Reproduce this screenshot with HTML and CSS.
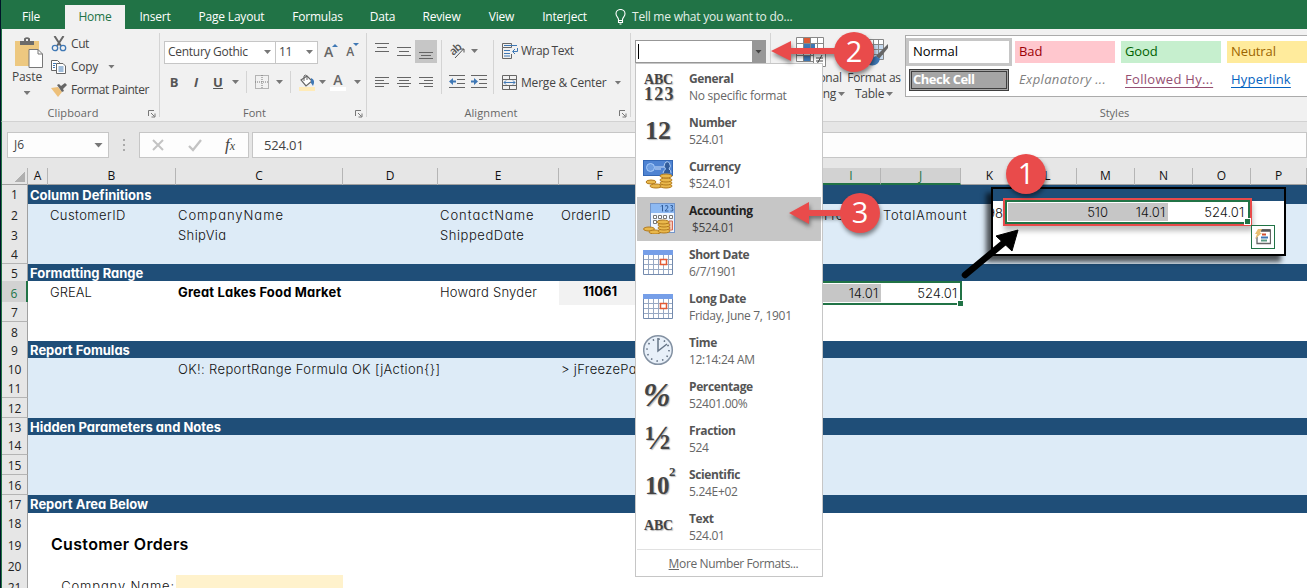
FILE: index.html
```
<!DOCTYPE html>
<html lang="en">
<head>
<meta charset="utf-8">
<title>Customer Orders</title>
<link rel="stylesheet" href="styles.css">
</head>
<body>
<div class="app">
  <nav class="tabs">
    <span class="tab file">File</span><span class="tab home">Home</span><span class="tab t-insert">Insert</span><span class="tab t-page">Page Layout</span><span class="tab t-form">Formulas</span><span class="tab t-data">Data</span><span class="tab t-rev">Review</span><span class="tab t-view">View</span><span class="tab t-int">Interject</span>
    <span class="tell"><svg width="11" height="16" viewBox="0 0 11 16" fill="none" stroke="#fff" stroke-width="1.1"><path d="M3.500 10.500C3.500 8.500 1 7.500 1 4.800A4.500 4.300 0 0 1 10 4.800C10 7.500 7.500 8.500 7.500 10.500V13.500H3.500ZM3.500 11.500H7.500M4.500 15H6.500"/></svg><span>Tell me what you want to do...</span></span>
  </nav>

  <section class="ribbon">
    <div class="group clip">
      <div class="tools">
        <div class="paste">
          <svg width="30" height="32" viewBox="0 0 30 32"><path d="M1 4H25V29H1Z" fill="#edc880"/><path d="M6 8V4H10V1.500Q13 -1 16 1.500V4H20V8Z" fill="#6b6b6b"/><rect x="12" y="2" width="2" height="2" fill="#eee"/><path d="M15 12.500H24L28.500 17V30.500H15Z" fill="#fff" stroke="#777"/><path d="M24 12.500V17H28.500" fill="none" stroke="#777"/></svg>
          <span>Paste</span><i class="car"></i>
        </div>
        <div class="cliplist">
          <div><svg width="16" height="16" viewBox="0 0 16 16" fill="none"><path d="M3.500 0L10 10M12.500 0L6 10" stroke="#666" stroke-width="2"/><circle cx="4" cy="12" r="2.700" stroke="#3f78b5" stroke-width="1.300"/><circle cx="12" cy="12" r="2.700" stroke="#3f78b5" stroke-width="1.300"/></svg><span>Cut</span></div>
          <div><svg width="16" height="16" viewBox="0 0 16 16" fill="#fff" stroke="#666"><path d="M.5 1.500H6.500L8.500 3.500V11.500H.5Z"/><path d="M5.500 4.500H12L14.500 7V14.500H5.500Z"/><path d="M2 4.500H5M2 6.500H4M2 8.500H4M7.500 8H12.500M7.500 10H12.500M7.500 12H12.500" stroke="#3f78b5"/></svg><span class="copy">Copy</span><i class="car"></i></div>
          <div><svg width="16" height="16" viewBox="0 0 16 16"><path d="M0 6L7 5L11 10L7 15Z" fill="#edc07a"/><path d="M6 3L8 2L10 4L14 1L16 3L12 7L13 9L11 10Z" fill="#666"/></svg><span class="painter">Format Painter</span></div>
        </div>
      </div>
      <footer>Clipboard</footer><svg class="launch" viewBox="0 0 8 8"><path d="M.5 6V.5H6M3 3L6.500 6.500M7 3.500V7H3.500" fill="none" stroke="#777"/></svg>
    </div>

    <div class="group font">
      <div class="tools col">
        <div class="line top">
          <div class="combo face"><span>Century Gothic</span><i class="car"></i></div><div class="combo size"><span>11</span><i class="car"></i></div>
          <span class="aa grow">A<svg width="6" height="3" viewBox="0 0 6 3"><path d="M0 3L3 0L6 3Z" fill="#3f78b5"/></svg></span>
          <span class="aa shrink">A<svg width="6" height="3" viewBox="0 0 6 3"><path d="M0 0L3 3L6 0Z" fill="#3f78b5"/></svg></span>
        </div>
        <div class="line bot fontbtns">
          <b>B</b><b class="it">I</b><b class="un">U</b><i class="car c1"></i><hr>
          <svg width="14" height="14" viewBox="0 0 14 14"><path d="M.5 .5H13.500V13.500H.5ZM7 0V14M0 7H14" fill="none" stroke="#777" stroke-dasharray="1 1"/></svg><i class="car c2"></i><hr class="h2">
          <svg width="17" height="17" viewBox="0 0 17 17"><path d="M2 6L8 2L13 7L7 12Z" fill="#fff" stroke="#666" stroke-width="1.200"/><path d="M5 7V2Q6 0 8 2V6" fill="none" stroke="#666"/><path d="M12 4Q17 6 14 12L12 9Z" fill="#3f78b5"/><rect x="0" y="13" width="16" height="4" fill="#ffebb8"/></svg><i class="car c3"></i>
          <span class="acolor">A</span><i class="car c4"></i>
        </div>
      </div>
      <footer>Font</footer><svg class="launch" viewBox="0 0 8 8"><path d="M.5 6V.5H6M3 3L6.500 6.500M7 3.500V7H3.500" fill="none" stroke="#777"/></svg>
    </div>

    <div class="group align">
      <div class="tools">
        <div class="alcol">
          <div class="alrow"><svg viewBox="0 0 22 23"><path d="M4 3.500H18M6 7.500H16M4 11.500H18"/></svg><svg viewBox="0 0 22 23"><path d="M4 7.500H18M6 11.500H16M4 15.500H18"/></svg><svg class="on" viewBox="0 0 22 23"><path d="M4 12.500H18M6 15.500H16M4 18.500H18"/></svg></div>
          <div class="alrow low"><svg viewBox="0 0 22 23"><path d="M4 4.500H18M4 7.500H13M4 10.500H18M4 13.500H13"/></svg><svg viewBox="0 0 22 23"><path d="M4 4.500H18M6 7.500H16M4 10.500H18M6 13.500H16"/></svg><svg viewBox="0 0 22 23"><path d="M4 4.500H18M9 7.500H18M4 10.500H18M9 13.500H18"/></svg></div>
        </div>
        <div class="orient">
          <div><span class="slant"><span>ab</span><svg width="17" height="17" viewBox="0 0 17 17"><path d="M6 15L14.500 6M11.500 6H15V9.500" fill="none" stroke="#555"/></svg></span><i class="car"></i></div>
          <div><svg width="17" height="14" viewBox="0 0 17 14"><path d="M0 .5H16M8 4.500H16M8 8.500H16M0 12.500H16" stroke="#666"/><path d="M0 6.500L4 3V5.500H7V7.500H4V10Z" fill="#3f78b5"/></svg><svg width="17" height="14" viewBox="0 0 17 14"><path d="M0 .5H16M8 4.500H16M8 8.500H16M0 12.500H16" stroke="#666"/><path d="M7 6.500L3 3V5.500H0V7.500H3V10Z" fill="#3f78b5"/></svg></div>
        </div>
        <div class="wraps">
          <div><svg width="16" height="16" viewBox="0 0 16 16" fill="none"><path d="M.5 .5H9.500V4.500H.5ZM9.500 11V15.500H.5V4.500" stroke="#666"/><path d="M2 2.500H15M2 7.500H8M2 10.500H8M2 13H8M15.500 5V8.500H11M13 6L10.500 8.500L13 11" stroke="#3f78b5"/></svg><span class="wt">Wrap Text</span></div>
          <div><svg width="16" height="16" viewBox="0 0 16 16" fill="none"><path d="M.5 .5H14.500V14.500H.5ZM0 4.500H15M0 10.500H15M7.500 0V4M7.500 11V15" stroke="#666"/><path d="M2 7.500H13M4 5.500L2 7.500L4 9.500M11 5.500L13 7.500L11 9.500" stroke="#3f78b5"/></svg><span class="mc">Merge &amp; Center</span><i class="car"></i></div>
        </div>
      </div>
      <footer>Alignment</footer><svg class="launch" viewBox="0 0 8 8"><path d="M.5 6V.5H6M3 3L6.500 6.500M7 3.500V7H3.500" fill="none" stroke="#777"/></svg>
    </div>

    <div class="group number">
      <div class="numbox"><span class="caret"></span><span class="drop"><i class="car"></i></span></div>
    </div>

    <div class="group styles">
      <div class="tools">
        <div class="big cond"><svg width="30" height="30" viewBox="0 0 30 30"><path d="M.5 .5H27.500V24.500H.5Z" fill="#fff"/><rect x="8" y="1" width="6" height="6" fill="#dd5a35"/><rect x="8" y="7" width="11" height="6" fill="#3f78b5"/><rect x="8" y="19" width="6" height="6" fill="#3f78b5"/><path d="M.5 .5H27.500V24.500H.5ZM0 6.500H28M0 12.500H28M0 18.500H28M7.500 0V25M14.500 0V25M21.500 0V25" fill="none" stroke="#888"/><path d="M17.500 15.500H29.500V29.500H17.500Z" fill="#fff" stroke="#888"/><path d="M20 21H27M20 24H27M26 18L21 27" stroke="#444"/></svg><span>Conditional</span><span>Formatting <i class="car"></i></span></div>
        <div class="big fat"><svg width="30" height="30" viewBox="0 0 30 30"><path d="M2.500 2.500H24.500V22.500H2.500Z" fill="#c5d9ee" stroke="#888"/><path d="M3 3H24V7H3Z" fill="#fff"/><path d="M2 7.500H25M2 12.500H25M2 17.500H25M8.500 2V23M14.500 2V23M19.500 2V23" stroke="#888"/><path d="M29 7L17 19L20 22L29 11Z" fill="#666"/><path d="M17 19Q13 20 10 28Q19 30 21 22Z" fill="#3f78b5"/></svg><span>Format as</span><span>Table <i class="car"></i></span></div>
        <div class="gallery">
          <span class="normal">Normal</span><span class="bad">Bad</span><span class="good">Good</span><span class="neutral">Neutral</span>
          <span class="check">Check Cell</span><span class="expl">Explanatory ...</span><span class="fol"><u>Followed Hy...</u></span><span class="hyp"><u>Hyperlink</u></span>
        </div>
      </div>
      <footer>Styles</footer>
    </div>
  </section>

  <section class="fbar">
    <div class="namebox"><span>J6</span><i class="car big-car"></i></div>
    <span class="dots"><svg width="2" height="12" viewBox="0 0 2 12"><path d="M0 0H2V2H0ZM0 5H2V7H0ZM0 10H2V12H0Z" fill="#aaa"/></svg></span>
    <div class="fbtns"><svg width="14" height="14" viewBox="0 0 14 14"><path d="M2 2L12 12M12 2L2 12" stroke="#c3c3c3" stroke-width="2"/></svg><svg width="14" height="14" viewBox="0 0 14 14"><path d="M1 8L5 12L13 2" fill="none" stroke="#c3c3c3" stroke-width="2.300"/></svg><em>f<small>x</small></em></div>
    <div class="fval">524.01</div>
  </section>

  <section class="sheet">
    <div class="row heads"><span class="corner"></span><span>A</span><span>B</span><span>C</span><span>D</span><span>E</span><span>F</span><span></span><span class="sel">I</span><span class="sel">J</span><span>K</span><span>L</span><span>M</span><span>N</span><span>O</span><span>P</span></div>
    <div class="row dark h19"><b class="n">1</b><span class="sec">Column Definitions</span></div>
    <div class="row light h20"><b class="n">2</b><span></span><span class="s4">CustomerID</span><span class="s9">CompanyName</span><span></span><span class="s9">ContactName</span><span class="s4">OrderID</span><span></span><span>Freight</span><span class="s7">TotalAmount</span></div>
    <div class="row light h20"><b class="n">3</b><span></span><span></span><span class="s4">ShipVia</span><span></span><span class="s6">ShippedDate</span></div>
    <div class="row light h20"><b class="n">4</b></div>
    <div class="row dark h17"><b class="n">5</b><span class="sec">Formatting Range</span></div>
    <div class="row h21"><b class="n nsel">6</b><span></span><span>GREAL</span><span class="bold">Great Lakes Food Market</span><span></span><span class="s3">Howard Snyder</span><span class="oid">11061</span><span></span><span class="num gray">14.01</span><span class="num act">524.01</span></div>
    <div class="row h20"><b class="n">7</b></div>
    <div class="row h19"><b class="n">8</b></div>
    <div class="row dark h17"><b class="n">9</b><span class="sec">Report Fomulas</span></div>
    <div class="row light h20"><b class="n">10</b><span></span><span></span><span class="s35">OK!: ReportRange Formula OK [jAction{}]</span><span></span><span></span><span class="s35">&gt; jFreezePanes</span></div>
    <div class="row light h20"><b class="n">11</b></div>
    <div class="row light h20"><b class="n">12</b></div>
    <div class="row dark h17"><b class="n">13</b><span class="sec">Hidden Parameters and Notes</span></div>
    <div class="row light h20"><b class="n">14</b></div>
    <div class="row light h20"><b class="n">15</b></div>
    <div class="row light h20"><b class="n">16</b></div>
    <div class="row dark h18"><b class="n">17</b><span class="sec">Report Area Below</span></div>
    <div class="row h19"><b class="n">18</b></div>
    <div class="row h24"><b class="n">19</b><span></span><span class="title">Customer Orders</span></div>
    <div class="row h19"><b class="n">20</b></div>
    <div class="row h21"><b class="n">21</b><span></span><span class="cname">Company Name:</span><span class="input"></span></div>
  </section>

  <div class="menu">
    <div class="item"><span class="gi two"><span>ABC</span><span class="n123">123</span></span><p><b>General</b><span>No specific format</span></p></div>
    <div class="item"><span class="gi n12">12</span><p><b>Number</b><span>524.01</span></p></div>
    <div class="item"><svg viewBox="0 0 32 32"><rect x=".5" y="2.500" width="29" height="15" fill="#4e83d2" stroke="#3467b4"/><circle cx="7.500" cy="9.500" r="4" fill="#6d9de0" stroke="#a9cdfc"/><path d="M12 9H21M12 11H18" stroke="#cde0fa"/><path d="M20 15Q21 12 22.500 11A3 4 0 1 1 26 11Q28 12 28 15" fill="#315c9b" stroke="#b1d0f7"/><g fill="#e9b84c" stroke="#b27a1d"><ellipse cx="8" cy="24" rx="5" ry="2"/><ellipse cx="13" cy="28" rx="6" ry="2"/><ellipse cx="23" cy="28" rx="6" ry="2"/><ellipse cx="23" cy="25" rx="6" ry="2"/><ellipse cx="23" cy="22" rx="6" ry="2"/><ellipse cx="23" cy="18" rx="6" ry="2"/></g></svg><p><b>Currency</b><span>$524.01</span></p></div>
    <div class="item hot"><svg viewBox="0 0 32 32"><rect x="7.500" y="1.500" width="24" height="29" fill="#eef5ff" stroke="#7495c8"/><rect x="8" y="2" width="23" height="9" fill="#8db9f2"/><path d="M18 4.500L19.500 3V9.500M22 4Q25 2.500 25 5Q25 6 22 9H25.500M27.500 3.500Q30.500 3 29.500 5L28.500 6Q31 7 29.500 9H27.500" fill="none" stroke="#335d99"/><g fill="#fff" stroke="#777"><path d="M10.500 13.500h3v3h-3zM15.500 13.500h3v3h-3zM20.500 13.500h3v3h-3zM26.500 13.500h3v3h-3zM10.500 18.500h3v3h-3zM15.500 18.500h3v3h-3z"/></g><path d="M26 19H29.500V28H26Z" fill="#f3c8bb" stroke="#d56b55"/><g fill="#e9b84c" stroke="#b27a1d"><ellipse cx="6" cy="27" rx="5.500" ry="2"/><ellipse cx="12" cy="30" rx="6" ry="2"/><ellipse cx="21" cy="29" rx="6" ry="2"/><ellipse cx="21" cy="26" rx="6" ry="2"/><ellipse cx="21" cy="23" rx="6" ry="2"/><ellipse cx="20" cy="20" rx="6" ry="2"/></g></svg><p><b>Accounting</b><span class="ind">$524.01</span></p></div>
    <div class="item"><svg viewBox="0 0 32 32"><path d="M.5 4.500H29.500V28.500H.5Z" fill="#fff" stroke="#738aad"/><rect x="0" y="4" width="30" height="5" fill="#769fe8"/><path d="M1 13.500H29M1 18.500H29M1 23.500H29M5.500 9V28M10.500 9V28M15.500 9V28M20.500 9V28M25.500 9V28" stroke="#98a9c4"/><rect x="17.500" y="13.500" width="6" height="5" fill="#fff" stroke="#e35b35" stroke-width="1.500"/></svg><p><b>Short Date</b><span>6/7/1901</span></p></div>
    <div class="item"><svg viewBox="0 0 32 32"><path d="M.5 4.500H29.500V28.500H.5Z" fill="#fff" stroke="#738aad"/><rect x="0" y="4" width="30" height="5" fill="#769fe8"/><path d="M1 13.500H29M1 18.500H29M1 23.500H29M5.500 9V28M10.500 9V28M15.500 9V28M20.500 9V28M25.500 9V28" stroke="#98a9c4"/><rect x="17.500" y="13.500" width="6" height="5" fill="#fff" stroke="#e35b35" stroke-width="1.500"/></svg><p><b>Long Date</b><span>Friday, June 7, 1901</span></p></div>
    <div class="item"><svg viewBox="0 0 32 32"><circle cx="15" cy="16" r="14.300" fill="#e8f0f9" stroke="#8391a2" stroke-width="1.500"/><circle cx="15" cy="16" r="11" fill="none" stroke="#596779" stroke-width="1.500" stroke-dasharray="1.500 4.260"/><path d="M15 4V17L24 10" fill="none" stroke="#667587" stroke-width="1.500"/></svg><p><b>Time</b><span>12:14:24 AM</span></p></div>
    <div class="item"><span class="gi pct">%</span><p><b>Percentage</b><span>52401.00%</span></p></div>
    <div class="item"><span class="gi half">½</span><p><b>Fraction</b><span>524</span></p></div>
    <div class="item"><span class="gi sci"><span>10</span><sup>2</sup></span><p><b>Scientific</b><span>5.24E+02</span></p></div>
    <div class="item"><span class="gi abc">ABC</span><p><b>Text</b><span>524.01</span></p></div>
    <div class="more"><span><u>M</u>ore Number Formats...</span></div>
  </div>

  <div class="inset">
    <div class="inset-head"></div>
    <div class="inset-row"><span class="clipnum">98</span><div class="range"><span class="a">510</span><span class="b">14.01</span><span class="c">524.01</span></div></div>
    <div class="smart"><svg width="16" height="16" viewBox="0 0 16 16"><path d="M6 1H15.500V14.500H2V8" fill="#fff" stroke="#666" stroke-width="1.300"/><path d="M6 1.500H15" stroke="#555" stroke-width="2.500"/><path d="M7 5.500H11" stroke="#d35230" stroke-width="2"/><path d="M6 8.500H13" stroke="#3f78b5" stroke-width="2"/><path d="M6 11.500H12" stroke="#5a9d83" stroke-width="2"/><path d="M3 0H7L5 4H7L0 10L2 5H0Z" fill="#e9bf72"/></svg></div>
  </div>

  <svg class="marks" width="1307" height="588" viewBox="0 0 1307 588">
    <path d="M965 275L1006 241" stroke="#000" stroke-width="6.500" stroke-linecap="round"/><path d="M1018 230L996 236L1012 251Z" stroke="#000" stroke-width="1"/>
    <g class="red"><path d="M771 51L791 41V48H836V54H791V61Z"/><circle cx="854" cy="52" r="20"/><path d="M789 213L809 202V210H842V216H809V224Z"/><circle cx="860" cy="213" r="20"/><circle cx="1026" cy="174" r="20"/></g>
    <g class="digits"><text x="854" y="62">2</text><text x="860" y="223">3</text><text x="1026" y="184">1</text></g>
  </svg>
</div>
</body>
</html>
```
FILE: styles.css
```
* { box-sizing: border-box; }
body { margin: 0; overflow: hidden; background: #fff; font: 12px/16px "Open Sans", "Noto Sans", sans-serif; color: #444; }
svg { display: block; flex: none; }
.app { position: relative; width: 1307px; height: 588px; overflow: hidden; border-left: 1px solid #001428; }
.app > .tabs, .app > .ribbon, .app > .fbar, .app > .sheet { border-left: 1px solid #217346; }
.car { display: inline-block; flex: none; width: 7px; height: 4px; background: #777; clip-path: polygon(0 0, 100% 0, 50% 100%); }

.tabs { display: flex; height: 29px; padding-top: 5px; background: #217346; color: #fff; letter-spacing: -.2px; }
.tab { flex: none; height: 24px; line-height: 24px; text-align: center; white-space: nowrap; }
.file { width: 58px; margin-right: 5px; }
.home { width: 60px; background: #f1f1f1; color: #217346; }
.t-insert { width: 60px; } .t-page { width: 93px; } .t-form { width: 79px; } .t-data { width: 51px; } .t-rev { width: 67px; } .t-view { width: 53px; } .t-int { width: 73px; }
.tell { display: flex; margin-left: 14px; gap: 6px; padding-top: 4px; white-space: nowrap; color: #e3f0e8; letter-spacing: -.23px; }

.ribbon { display: flex; height: 93px; background: #f1f1f1; border-bottom: 1px solid #d2d2d2; }
.group { position: relative; flex: none; display: flex; flex-direction: column; height: 92px; }
.group::after { content: ""; position: absolute; right: 0; top: 4px; height: 84px; width: 1px; background: #d4d4d4; }
.tools { display: flex; height: 76px; flex: none; }
.col { flex-direction: column; }
.group footer { font-size: 11px; line-height: 16px; text-align: center; color: #666; }
.launch { position: absolute; right: 4px; bottom: 3px; width: 8px; height: 8px; }
.clip { width: 158px; } .clip footer { padding-right: 16px; letter-spacing: .15px; }
.paste { width: 50px; padding-top: 8px; display: flex; flex-direction: column; align-items: center; letter-spacing: -.1px; }
.paste svg { margin-left: 4px; }
.paste .car { margin-top: 6px; }
.cliplist { padding-top: 3px; white-space: nowrap; letter-spacing: -.4px; }
.cliplist div { display: flex; align-items: center; height: 23px; gap: 3px; }
.cliplist svg { margin-left: -1px; margin-right: 1px; }
.copy { margin-right: 7px; letter-spacing: -.3px; }
.painter { letter-spacing: -.4px; }
.font { width: 207px; } .font footer { padding-right: 18px; }
.line { display: flex; align-items: center; }
.top { height: 24px; margin: 11px 0 0 4px; }
.combo { display: flex; align-items: center; justify-content: space-between; height: 23px; background: #fff; border: 1px solid #c6c6c6; padding: 0 4px 0 3px; letter-spacing: -.28px; white-space: nowrap; }
.face { width: 112px; } .size { width: 43px; margin-left: -1px; }
.aa { display: flex; font-size: 14px; line-height: 20px; font-weight: 600; color: #666; }
.aa svg { margin: 2px 0 0 -1px; }
.grow { margin-left: 6px; } .shrink { margin-left: 8px; font-size: 12px; line-height: 22px; }
.fontbtns { height: 24px; margin: 6px 0 0 8px; }
.fontbtns b { width: 12px; font-size: 13px; text-align: center; color: #555; }
.fontbtns b.it { margin-left: 10px; font-style: italic; } .fontbtns b.un { margin-left: 10px; text-decoration: underline; }
.fontbtns hr { width: 1px; height: 22px; margin: 0 8px 0 7px; border: 0; background: #d4d4d4; flex: none; }
.c1 { margin-left: 8px; } .c2 { margin-left: 7px; } .c3 { margin-left: 3px; } .c4 { margin-left: 8px; }
.fontbtns .h2 { margin: 0 8px 0 7px; }
.acolor { width: 16px; height: 18px; margin-left: 4px; border-bottom: 4px solid #fff; font-weight: 600; font-size: 14px; line-height: 14px; text-align: center; color: #666; }
.align { width: 264px; } .align footer { padding-right: 16px; letter-spacing: .1px; }
.alcol { padding: 11px 0 0 4px; }
.alrow { display: flex; height: 33px; }
.alrow svg { width: 22px; height: 23px; stroke: #666; fill: none; }
.alrow .on { background: #c6c6c6; }
.orient { width: 53px; margin: 11px 0 0 4px; border: solid #d4d4d4; border-width: 0 1px; height: 54px; padding-left: 7px; }
.orient div { display: flex; align-items: center; gap: 5px; height: 22px; margin-bottom: 9px; }
.slant { position: relative; width: 17px; height: 17px; font-size: 11px; line-height: 12px; color: #555; font-weight: 600; letter-spacing: -.5px; }
.slant > span { position: absolute; left: 0; top: 0; transform: rotate(-42deg); }
.wraps { padding: 11px 0 0 8px; white-space: nowrap; }
.wraps div { display: flex; align-items: center; gap: 3px; height: 21px; margin-bottom: 11px; }
.wraps .car { margin-left: 5px; }
.wt { letter-spacing: -.5px; } .mc { letter-spacing: -.2px; }
.number { width: 140px; }
.numbox { display: flex; justify-content: space-between; width: 131px; height: 23px; margin: 11px 0 0 4px; border: 1px solid #979797; background: #fff; }
.caret { width: 1px; height: 15px; margin: 3px 0 0 2px; background: #000; }
.drop { display: flex; align-items: center; justify-content: center; width: 13px; background: #979797; }
.drop .car { background: #444; }
.styles { width: 536px; } .styles footer { padding-left: 151px; }
.styles::after { display: none; }
.big { flex: none; display: flex; flex-direction: column; align-items: center; padding-top: 8px; white-space: nowrap; letter-spacing: -.25px; }
.big span { line-height: 16px; }
.big svg { margin-bottom: 3px; }
.cond { width: 62px; margin-left: 10px; }
.fat { width: 58px; margin-left: 2px; }
.cond { padding-right: 2px; }
.big .car { vertical-align: 2px; margin-left: -1px; }
.gallery { display: grid; grid-template-columns: 100px 100px 100px 100px; grid-template-rows: 22px 22px; gap: 6px; width: 430px; height: 62px; margin: 6px 0 0 2px; padding: 5px 3px; border: 1px solid #ababab; background: #fff; font-size: 13px; flex: none; letter-spacing: -.1px; }
.gallery span { padding-left: 4px; line-height: 21px; white-space: nowrap; }
.normal { color: #000; outline: 3px solid #c6c6c6; } .bad { background: #ffc7ce; color: #9c0006; } .good { background: #c6efce; color: #006100; } .neutral { background: #ffeb9c; color: #9c6500; }
.gallery .check { background: #a5a5a5; color: #fff; font-weight: 700; border: 3px double #3f3f3f; line-height: 15px; padding-left: 1px; letter-spacing: -.5px; }
.expl { font-style: italic; color: #7f7f7f; letter-spacing: .35px; } .fol { color: #954f72; letter-spacing: .3px; } .hyp { color: #0563c1; letter-spacing: .2px; }
.gallery u { text-underline-offset: 3px; }

.fbar { display: flex; height: 46px; padding: 10px 0 11px 5px; background: #e6e6e6; }
.namebox, .fbtns, .fval { border: 1px solid #c6c6c6; background: #fdfdfd; height: 26px; display: flex; align-items: center; }
.namebox { width: 102px; justify-content: space-between; padding: 0 5px 0 6px; }
.big-car { width: 9px; height: 5px; }
.dots { width: 30px; padding: 7px 0 0 14px; }
.fbtns { width: 110px; gap: 23px; padding-left: 11px; }
.fbtns em { font: italic 17px/20px "Liberation Serif", serif; } .fbtns small { font-size: 12px; }
.fval { flex: 1; margin-left: 3px; padding-left: 11px; font-size: 13px; letter-spacing: -.15px; }

.sheet { background: #fff; font-family: Inter, "Open Sans", sans-serif; font-feature-settings: "cv11"; font-size: 13px; color: #111; }
.row { display: grid; grid-template-columns: 26px 20px 128px 167px 95px 121px 82px 181px 59px 80px repeat(5, 58px) 56px; }
.row > span { min-width: 0; padding-left: 2px; line-height: 22px; white-space: nowrap; font-weight: 300; }
.row > .s3 { letter-spacing: .25px; } .row > .s35 { letter-spacing: .36px; } .row > .s4 { letter-spacing: .4px; } .row > .s6 { letter-spacing: .55px; } .row > .s7 { letter-spacing: .7px; } .row > .s9 { letter-spacing: .95px; }
.h17 { height: 17px; } .h18 { height: 18px; } .h19 { height: 19px; } .h20 { height: 20px; } .h21 { height: 21px; } .h24 { height: 24px; }
.dark { background: #1f4e78; } .light { background: #ddebf7; }
.row .n { background: #e6e6e6; border-right: 1px solid #a0a0a0; border-bottom: 1px solid #b4b4b4; text-align: center; font: 12px/16px "Open Sans", sans-serif; display: flex; align-items: center; justify-content: center; padding-top: 3px; color: #222; }
.row.dark .n { padding-top: 1px; }
.row .nsel { background: #d2d2d2; color: #217346; border-right: 2px solid #217346; }
.heads { height: 17px; background: #e6e6e6; border-bottom: 1px solid #a0a0a0; }
.heads > span { padding: 0; text-align: center; font: 12px/15px "Open Sans", sans-serif; border-right: 1px solid #b5b5b5; }
.heads .sel { background: #d2d2d2; color: #217346; border-bottom: 2px solid #217346; height: 17px; }
.heads .corner { background: linear-gradient(135deg, transparent 50%, #b0b0b0 50%) 13px 4px / 10px 10px no-repeat; }
.row > .sec { grid-column: 2 / 9; color: #fff; font-weight: 700; line-height: 19px; }
.row.h19 > .sec { line-height: 20px; }
.row > .bold, .row > .oid { font-weight: 700; color: #000; letter-spacing: .17px; }
.row > .oid { background: #f2f2f2; text-align: center; letter-spacing: 0; line-height: 21px; padding: 0; }
.row > .num { text-align: right; padding-right: 3px; border: solid #217346; border-width: 2px 0; line-height: 20px; }
.row > .gray { background: #c6c6c6; box-shadow: inset 0 -1px #fff, inset 0 1px #fff; }
.row > .act { border-right-width: 2px; margin-right: -1px; position: relative; }
.act::after { content: ""; position: absolute; right: -3px; bottom: -3px; width: 5px; height: 5px; background: #217346; outline: 1px solid #fff; }
.row > .title { font-size: 16px; font-weight: 600; color: #000; line-height: 25px; padding-left: 3px; letter-spacing: .33px; }
.row > .cname { text-align: right; padding-right: 1px; letter-spacing: .85px; line-height: 23px; }
.input { background: #fff2cc; }

.menu { position: absolute; left: 634px; top: 63px; width: 188px; height: 514px; padding: 1px; background: #fff; border: 1px solid #c6c6c6; color: #666; }
.item { display: flex; height: 44px; padding: 5px 0 0 6px; gap: 14px; }
.item svg { width: 32px; height: 32px; }
.item p { margin: 0; display: flex; flex-direction: column; white-space: nowrap; }
.item b { line-height: 17px; color: #555; letter-spacing: -.38px; } .item p span { line-height: 17px; letter-spacing: -.3px; }
.item:first-child p span { letter-spacing: -.25px; }
.hot { background: #c6c6c6; color: #444; } .item.hot b { color: #222; }
.ind { padding-left: 3px; }
.gi { flex: none; width: 32px; height: 32px; font-family: "Liberation Serif", serif; font-weight: 700; color: #444; text-shadow: 1px 1px 1px #bbb; white-space: nowrap; }
.two { display: flex; flex-direction: column; padding: 3px 0 0 1px; font-size: 14px; line-height: 13px; letter-spacing: -.2px; }
.n123 { font-size: 18px; line-height: 16px; letter-spacing: 1.3px; }
.n12 { padding-left: 2px; font-size: 26px; line-height: 34px; }
.pct { font-size: 33px; line-height: 34px; font-style: italic; }
.half { padding-left: 2px; font-size: 34px; line-height: 32px; }
.sci { display: flex; padding-left: 2px; font-size: 25px; line-height: 40px; letter-spacing: -.5px; }
.sci sup { font-size: 13px; line-height: 9px; padding-top: 1px; }
.abc { padding-left: 1px; font-size: 14px; line-height: 32px; letter-spacing: -.2px; }
.more { border-top: 1px solid #e1e1e1; text-align: center; line-height: 27px; padding-left: 9px; letter-spacing: -.37px; }

.inset { position: absolute; left: 990px; top: 187px; width: 295px; height: 69px; border: 2px solid #000; background: #fff; box-shadow: -5px 6px 5px rgba(0,0,0,.65); font: 300 13px/19px Inter, sans-serif; color: #111; }
.inset-head { height: 12px; background: #1f4e78; }
.inset-row { display: flex; }
.clipnum { flex: none; width: 10px; height: 22px; line-height: 24px; direction: rtl; overflow: hidden; }
.range { display: flex; width: 249px; height: 28px; margin-top: -3px; padding: 2px; border: 2px solid #e84a4a; box-shadow: 1px 5px 5px rgba(0,0,0,.25), inset 0 0 0 2px #217346; text-align: right; position: relative; }
.range::after { content: ""; position: absolute; right: 0; bottom: 0; width: 5px; height: 5px; background: #217346; outline: 1px solid #fff; }
.range span { height: 18px; margin-top: 1px; }
.a { width: 102px; margin-left: 1px; padding-right: 2px; background: #c6c6c6; } .b { width: 58px; padding-right: 3px; background: #c6c6c6; } .c { width: 76px; }
.smart { position: absolute; left: 258px; top: 36px; width: 24px; height: 24px; padding: 3px; border: 1px solid #217346; background: #fff; }
.marks { position: absolute; left: -1px; top: 0; }
.red { fill: #e94b4b; filter: drop-shadow(1px 3px 2px rgba(0,0,0,.45)); }
.digits { fill: #fff; font: 29px "Open Sans", sans-serif; text-anchor: middle; }
```
